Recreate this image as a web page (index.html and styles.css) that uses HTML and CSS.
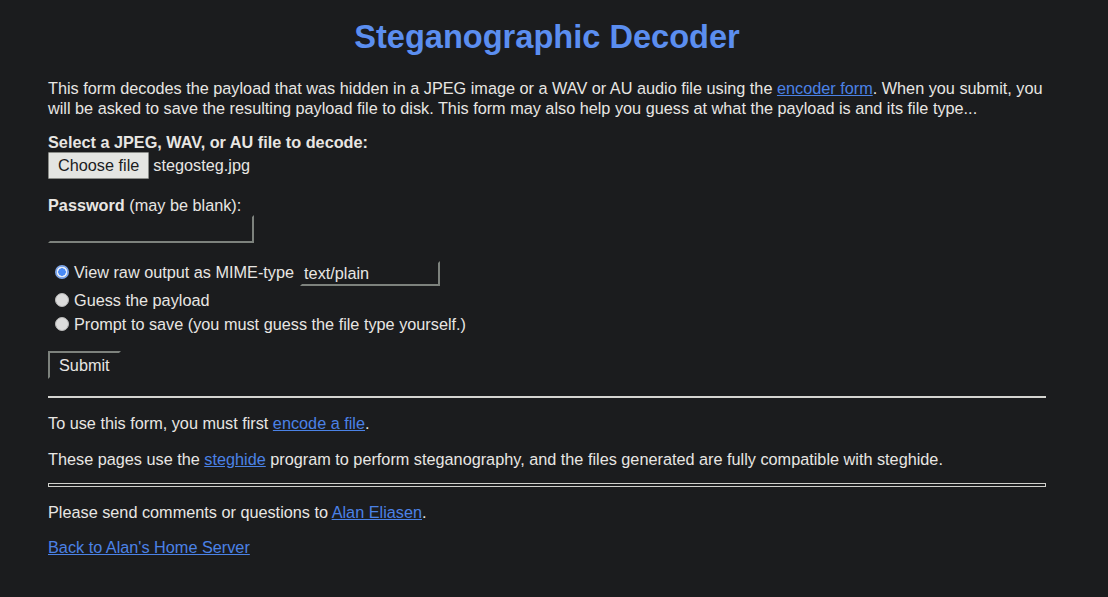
FILE: index.html
```html
<!DOCTYPE html>
<html>
<head>
<meta charset="utf-8">
<title>Steganographic Decoder</title>
<link rel="stylesheet" href="styles.css">
</head>
<body>
<div class="page">
  <h1 class="title">Steganographic Decoder</h1>
  <p class="intro">This form decodes the payload that was hidden in a JPEG image or a WAV or AU audio file using the <a href="#">encoder form</a>. When you submit, you will be asked to save the resulting payload file to disk. This form may also help you guess at what the payload is and its file type...</p>
  <form class="form">
    <div class="field">
      <div class="label"><b>Select a JPEG, WAV, or AU file to decode:</b></div>
      <div class="file-row"><span class="file-btn">Choose file</span><span class="file-name">stegosteg.jpg</span></div>
    </div>
    <div class="field pw">
      <div class="label"><b>Password</b> (may be blank):</div>
      <span class="text-input pw-input"></span>
    </div>
    <div class="options">
      <div class="opt first"><span class="radio checked"></span><span>View raw output as MIME-type</span><span class="text-input mime-input">text/plain</span></div>
      <div class="opt"><span class="radio"></span><span>Guess the payload</span></div>
      <div class="opt"><span class="radio"></span><span>Prompt to save (you must guess the file type yourself.)</span></div>
    </div>
    <span class="submit">Submit</span>
  </form>
  <div class="rule thin"></div>
  <p class="line first-line">To use this form, you must first <a href="#">encode a file</a>.</p>
  <p class="line">These pages use the <a href="#">steghide</a> program to perform steganography, and the files generated are fully compatible with steghide.</p>
  <div class="rule thick"></div>
  <p class="line after-rule">Please send comments or questions to <a href="#">Alan Eliasen</a>.</p>
  <p class="line last"><a href="#">Back to Alan's Home Server</a></p>
</div>
</body>
</html>
```
FILE: styles.css
```css
html, body {
  margin: 0;
  padding: 0;
  background: #1b1c1e;
}
body {
  font-family: "Liberation Sans", Arial, sans-serif;
  font-size: 16.25px;
  color: #e8e6e3;
}
.page {
  width: 998px;
  margin-left: 48px;
  padding-top: 18px;
}
.title {
  margin: 0;
  text-align: center;
  color: #5b8ef0;
  font-size: 32.6px;
  font-weight: bold;
  line-height: 38px;
}
a {
  color: #4b82e6;
  text-decoration: underline;
}
.intro {
  margin: 22px 0 0;
  line-height: 20px;
}
.form {
  margin-top: 14px;
}
.label {
  line-height: 20px;
}
.file-row {
  display: flex;
  align-items: center;
  gap: 4px;
}
.file-btn {
  display: inline-block;
  background: #e4e5e2;
  color: #1b1c1e;
  border: 1px solid #8a8c88;
  padding: 0 9px;
  height: 25px;
  line-height: 25px;
  border-radius: 1px;
}
.field.pw {
  margin-top: 16px;
}
.text-input {
  display: inline-block;
  box-sizing: border-box;
  border-style: solid;
  border-width: 2px;
  border-color: #1b1c1e #7d827d #7d827d #1b1c1e;
  background: #1b1c1e;
  color: #e8e6e3;
}
.pw-input {
  width: 206px;
  height: 28px;
  margin-top: 0;
  vertical-align: top;
}
.options {
  margin-top: 15px;
  padding-left: 7px;
}
.opt {
  display: flex;
  align-items: center;
  height: 24px;
}
.opt.first {
  height: 28px;
  margin-bottom: 2px;
}
.radio {
  box-sizing: border-box;
  width: 14px;
  height: 14px;
  border-radius: 50%;
  background: #dcdcdc;
  border: 1px solid #b8b8b8;
  margin-right: 5px;
  flex: none;
}
.radio.checked {
  background: radial-gradient(circle, #4a8af4 0 3.5px, #e6ecf6 4px 5px, #7fa6e8 5.5px);
  border: none;
}
.mime-input {
  width: 140px;
  height: 25px;
  margin-left: 6px;
  margin-top: 2px;
  padding: 0 2px;
  line-height: 21px;
}
.submit {
  display: inline-block;
  box-sizing: border-box;
  margin-top: 15px;
  height: 28px;
  line-height: 24px;
  padding: 0 9px;
  border-style: solid;
  border-width: 2px;
  border-color: #7d827d #1b1c1e #1b1c1e #7d827d;
  color: #e8e6e3;
}
.rule {
  box-sizing: border-box;
}
.rule.thin {
  margin-top: 17px;
  height: 2px;
  background: #d4d4d0;
}
.rule.thick {
  margin-top: 15px;
  height: 4px;
  border: 1px solid #cfcfcb;
}
.line {
  margin: 18px 0 0;
  line-height: 18px;
}
.line.first-line {
  margin-top: 16px;
}
.line.after-rule {
  margin-top: 16px;
}
.line.last {
  margin-top: 17px;
}
```
